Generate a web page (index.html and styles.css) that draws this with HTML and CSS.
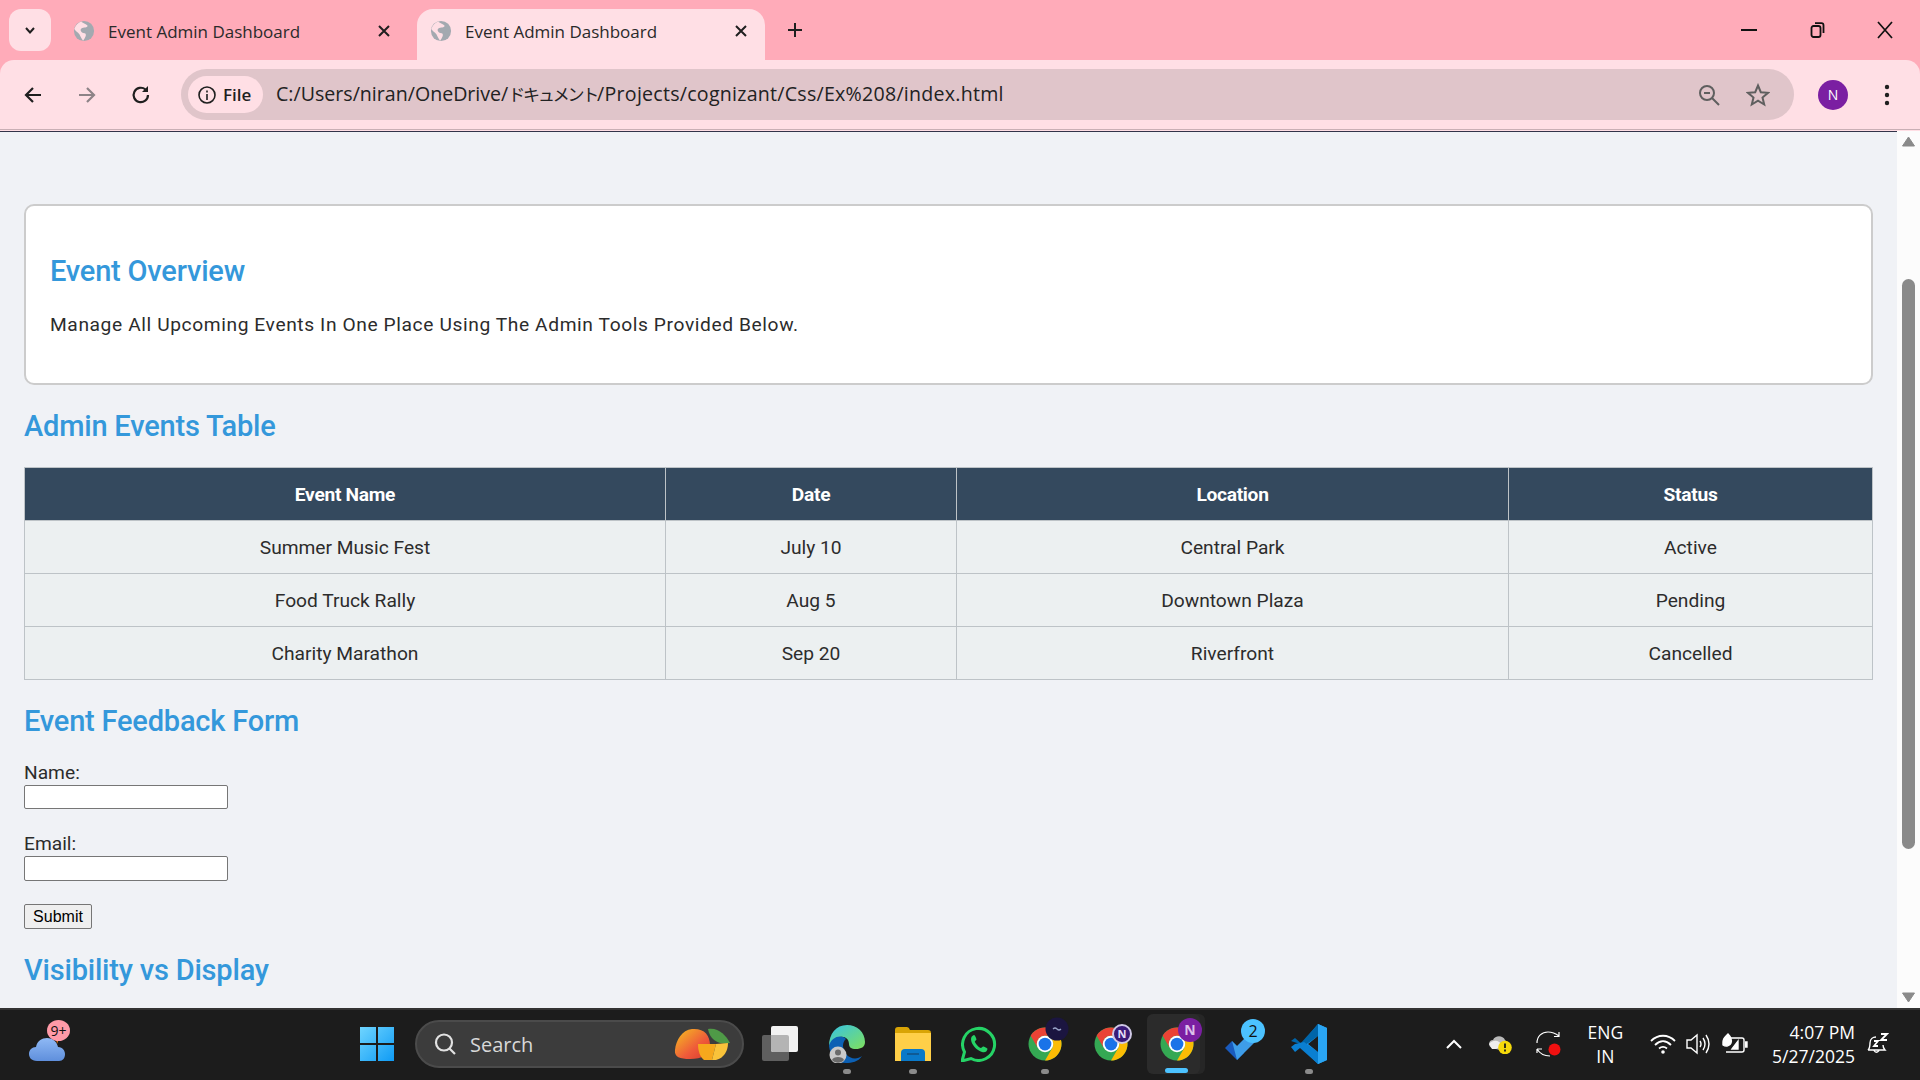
FILE: index.html
```html
<!DOCTYPE html>
<html>
<head>
	<meta charset="utf-8">
	<title>Event Admin Dashboard</title>
	<link rel="stylesheet" href="styles.css">
</head>
<body>
	<svg class="defs" width="0" height="0">
		<symbol id="globe" viewBox="0 0 24 24">
			<circle cx="12" cy="12" r="11" fill="#a3a9b0"/>
			<path d="M9 1.500C11 4 15 4 16 6.500 14.500 9 10 7.500 8.500 10 7.500 12.500 11 14.500 13 14.500 15.500 16 13 20 11 22.500 8 19 8 16 5.500 14 3.500 12.500 2 11 1.500 9.500 3 5 6 2.500 9 1.500Z" fill="#ffdfe5"/>
		</symbol>
		<symbol id="close" viewBox="0 0 16 16">
			<path d="M3 3 13 13M13 3 3 13" stroke="#1f1f1f" stroke-width="2" fill="none"/>
		</symbol>
		<symbol id="chrome" viewBox="0 0 48 48">
			<circle cx="24" cy="24" r="22" fill="#34a853"/>
			<path d="M4.950 13A22 22 0 0 1 43.050 13H24A11 11 0 0 0 14.500 29.500Z" fill="#ea4335"/>
			<path d="M43.050 13H24A11 11 0 0 1 33.500 29.500L24 46A22 22 0 0 0 43.050 13Z" fill="#fbbc04"/>
			<circle cx="24" cy="24" r="11" fill="#fff"/>
			<circle cx="24" cy="24" r="8.500" fill="#1a73e8"/>
		</symbol>
	</svg>

	<header class="tabstrip">
		<div class="tab-menu">
			<svg width="14" height="14" viewBox="0 0 14 14"><path d="M3 5 7 9.500 11 5" stroke="#1f1f1f" stroke-width="2" fill="none"/></svg>
		</div>
		<div class="tab">
			<svg class="favicon"><use href="#globe"/></svg>
			<span class="tab-title">Event Admin Dashboard</span>
			<svg class="tab-close"><use href="#close"/></svg>
		</div>
		<div class="tab tab-active">
			<svg class="favicon"><use href="#globe"/></svg>
			<span class="tab-title">Event Admin Dashboard</span>
			<svg class="tab-close"><use href="#close"/></svg>
		</div>
		<svg class="tab-new" width="18" height="18" viewBox="0 0 18 18"><path d="M9 2V16M2 9H16" stroke="#1f1f1f" stroke-width="2"/></svg>
		<div class="window-buttons">
			<svg width="16" height="16" viewBox="0 0 16 16"><path d="M0 8H16" stroke="#111" stroke-width="2"/></svg>
			<svg width="16" height="16" viewBox="0 0 16 16" fill="none" stroke="#111" stroke-width="1.800"><rect x="2.500" y="4" width="9" height="11" rx="2"/><path d="M6 1.200H12.500Q14.500 1.200 14.500 3.200V11"/></svg>
			<svg width="16" height="18" viewBox="0 0 16 18"><path d="M1 1 15 17M15 1 1 17" stroke="#111" stroke-width="1.700"/></svg>
		</div>
	</header>

	<nav class="toolbar">
		<svg class="nav-icon" width="22" height="22" viewBox="0 0 22 22" fill="none" stroke="#1f1f1f" stroke-width="2.200"><path d="M19 11H4M11 4 4 11 11 18"/></svg>
		<svg class="nav-icon" width="22" height="22" viewBox="0 0 22 22" fill="none" stroke="#8d8387" stroke-width="2.200"><path d="M3 11H18M11 4 18 11 11 18"/></svg>
		<svg class="nav-icon" width="22" height="22" viewBox="0 0 22 22" fill="none" stroke="#1f1f1f" stroke-width="2.200"><path d="M18 11A7.200 7.200 0 1 1 15.500 5.500"/><path d="M18 2V8H12" fill="#1f1f1f" stroke="none"/></svg>
		<div class="omnibox">
			<div class="file-chip">
				<svg width="20" height="20" viewBox="0 0 20 20" fill="none" stroke="#1f1f1f" stroke-width="1.600"><circle cx="10" cy="10" r="8"/><path d="M10 9V15M10 5.500V7.500"/></svg>
				<span>File</span>
			</div>
			<span class="url">C:/Users/niran/OneDrive/<span class="url-kana">ドキュメント</span><span class="url-tail">/Projects/cognizant/Css/Ex%208/index.html</span></span>
			<svg class="omni-icon" width="24" height="24" viewBox="0 0 24 24" fill="none" stroke="#5f5f5f" stroke-width="2"><circle cx="10" cy="10" r="7"/><path d="M15 15 22 22M7 10H13"/></svg>
			<svg class="omni-icon" width="24" height="24" viewBox="0 0 24 24" fill="none" stroke="#5f5f5f" stroke-width="2"><path d="M12 2.500 14.800 9.200 22 9.800 16.500 14.500 18.200 21.500 12 17.700 5.800 21.500 7.500 14.500 2 9.800 9.200 9.200Z"/></svg>
		</div>
		<div class="avatar">N</div>
		<svg width="6" height="22" viewBox="0 0 6 22" fill="#1f1f1f"><circle cx="3" cy="3" r="2.200"/><circle cx="3" cy="11" r="2.200"/><circle cx="3" cy="19" r="2.200"/></svg>
	</nav>

	<div class="viewport">
		<main class="page">
			<section class="card">
				<h2 class="overview-title">Event Overview</h2>
				<p class="overview-text">Manage All Upcoming Events In One Place Using The Admin Tools Provided Below.</p>
			</section>

			<h2 class="section-title">Admin Events Table</h2>
			<table class="events">
				<tr>
					<th class="col-name">Event Name</th>
					<th class="col-date">Date</th>
					<th class="col-place">Location</th>
					<th class="col-status">Status</th>
				</tr>
				<tr>
					<td>Summer Music Fest</td>
					<td>July 10</td>
					<td>Central Park</td>
					<td>Active</td>
				</tr>
				<tr>
					<td>Food Truck Rally</td>
					<td>Aug 5</td>
					<td>Downtown Plaza</td>
					<td>Pending</td>
				</tr>
				<tr>
					<td>Charity Marathon</td>
					<td>Sep 20</td>
					<td>Riverfront</td>
					<td>Cancelled</td>
				</tr>
			</table>

			<h2 class="section-title feedback-title">Event Feedback Form</h2>
			<form class="feedback">
				<label class="field-label">Name:</label>
				<input class="field-input" type="text">
				<label class="field-label">Email:</label>
				<input class="field-input field-tall" type="email">
				<button class="submit" type="button">Submit</button>
			</form>

			<h2 class="section-title">Visibility vs Display</h2>
		</main>
		<div class="scrollbar">
			<svg width="13" height="11" viewBox="0 0 13 11"><path d="M6.500 1 12.500 10H.5Z" fill="#8a8a8a" stroke="#8a8a8a" stroke-linejoin="round"/></svg>
			<div class="thumb-track"><div class="thumb"></div></div>
			<svg width="13" height="11" viewBox="0 0 13 11"><path d="M6.500 10 12.500 1H.5Z" fill="#8a8a8a" stroke="#8a8a8a" stroke-linejoin="round"/></svg>
		</div>
	</div>

	<footer class="taskbar">
		<div class="weather">
			<svg width="38" height="26" viewBox="0 0 38 26"><defs><linearGradient id="cloud" x1="0" y1="0" x2="0" y2="1"><stop offset="0" stop-color="#8fb9f5"/><stop offset="1" stop-color="#5f8fdc"/></linearGradient></defs><path d="M27 2 31 0 28 8Z" fill="#ef7c1a"/><path d="M8 25C2 25 0 21 0 18 0 14 3 11 7 11 8 5 13 2 18 2 24 2 28 6 29 11 34 11 36 15 36 18 36 22 34 25 30 25Z" fill="url(#cloud)"/></svg>
			<span class="weather-badge">9+</span>
		</div>

		<div class="task-center">
			<div class="app">
				<svg width="36" height="36" viewBox="0 0 36 36"><defs><linearGradient id="win" x1="0" y1="0" x2="1" y2="1"><stop offset="0" stop-color="#6fd5ff"/><stop offset="1" stop-color="#0f9bf5"/></linearGradient></defs><path d="M1 1H17V17H1ZM19 1H35V17H19ZM1 19H17V35H1ZM19 19H35V35H19Z" fill="url(#win)"/></svg>
			</div>
			<div class="search">
				<svg width="24" height="24" viewBox="0 0 24 24" fill="none" stroke="#e2e2e2" stroke-width="2.200"><circle cx="11" cy="10.500" r="8"/><path d="M16.500 16.500 22 22"/></svg>
				<span class="search-text">Search</span>
				<svg class="mango" width="56" height="34" viewBox="0 0 56 34"><defs><linearGradient id="mango" x1="0" y1="0" x2="1" y2="1"><stop offset="0" stop-color="#f5c21f"/><stop offset=".6" stop-color="#ef5a3a"/><stop offset="1" stop-color="#d93a2e"/></linearGradient></defs><path d="M18 2C30 1 36 8 36 18 36 28 28 32 16 32 6 32 0 30 1 23 2 13 8 3 18 2Z" fill="url(#mango)"/><path d="M34 2C44 0 52 8 56 16 46 18 36 14 34 2Z" fill="#4f9a47"/><path d="M24 17H42L38 33H30C26 30 24 24 24 17Z" fill="#f6a81c"/><path d="M42 17 54 16C54 24 50 31 42 33H38Z" fill="#f9c33a"/></svg>
			</div>
			<div class="app">
				<svg width="38" height="36" viewBox="0 0 38 36"><rect x="0" y="9" width="27" height="26" rx="2" fill="#5f5f5f"/><rect x="9" y="0" width="27" height="26" rx="2" fill="#f2f2f2"/><path d="M9 9H25Q27 9 27 11V26H11Q9 26 9 24Z" fill="#b4b4b4"/></svg>
			</div>
			<div class="app app-open">
				<svg width="36" height="38" viewBox="0 0 36 38"><defs><linearGradient id="edge" x1="0" y1="0" x2="1" y2="1"><stop offset="0" stop-color="#36c3e6"/><stop offset="1" stop-color="#7fe05c"/></linearGradient></defs><path d="M18 0C28 0 36 7 36 17 36 22 32 24 27 24 22 24 20 22 20 19 20 14 16 11 11 12 6 13 2 17 0 21 0 9 7 0 18 0Z" fill="url(#edge)"/><path d="M0 21C2 12 12 9 17 14 13 17 13 24 17 29 21 34 28 35 33 31 29 37 23 38 17 38 8 38 1 31 0 21Z" fill="#0c60b4"/><circle cx="9" cy="30" r="8.500" fill="#c9c9c9"/><circle cx="9" cy="27.500" r="3" fill="#6b6b6b"/><path d="M3 35C4 31 14 31 15 35 12 38.500 6 38.500 3 35Z" fill="#6b6b6b"/></svg>
			</div>
			<div class="app app-open">
				<svg width="36" height="34" viewBox="0 0 36 34"><path d="M0 4V3Q0 0 3 0H12Q14 0 15 3H33Q36 3 36 6V34H0Z" fill="#d9a405"/><path d="M0 6H36V34H0Z" fill="#ffcf48"/><path d="M6 34V26Q6 22 10 22H26Q30 22 30 26V34Z" fill="#0a79c9"/><path d="M12 27H24" stroke="#0f5a94" stroke-width="2"/></svg>
			</div>
			<div class="app">
				<svg width="36" height="36" viewBox="0 0 36 36"><path d="M1 35 3.500 26A16 16 0 1 1 10 32.500Z" fill="none" stroke="#25d366" stroke-width="3"/><path d="M12 9.500C10 10.500 9.500 13 10.500 16 12 20 16 24.500 21 26 24 27 26 25.500 26.500 23 26.500 22 23 20.500 22 20.500L20 22C18 21.500 14.500 18 13.800 15.500L15.500 13.500C15.500 12.500 14 9 13 9Z" fill="#25d366"/></svg>
			</div>
			<div class="app app-open">
				<svg class="chrome-logo"><use href="#chrome"/></svg>
				<svg class="chrome-badge" width="24" height="24" viewBox="0 0 24 24"><circle cx="12" cy="12" r="11.500" fill="#1b1540"/><path d="M8 12Q10 10 12 12T16 12" stroke="#9aa4c8" stroke-width="1.200" fill="none"/></svg>
			</div>
			<div class="app">
				<svg class="chrome-logo"><use href="#chrome"/></svg>
				<span class="profile-badge profile-outline">N</span>
			</div>
			<div class="app app-active">
				<svg class="chrome-logo"><use href="#chrome"/></svg>
				<span class="profile-badge">N</span>
			</div>
			<div class="app">
				<svg width="36" height="32" viewBox="0 0 36 32"><path d="M0 20 7 13 19 25 12 32Z" fill="#195abd"/><path d="M7 13 12 18 29 1 36 8 12 32Z" fill="#3e9de8"/></svg>
				<span class="todo-badge">2</span>
			</div>
			<div class="app app-open">
				<svg width="36" height="40" viewBox="0 0 36 40"><path d="M27 0 36 4V36L27 40 9 22Z" fill="#1f9cf0"/><path d="M27 0 27 12 13 22 4 14 0 17 9 20 27 0Z" fill="#0065a9"/><path d="M0 23 4 20 13 18 27 28V40L9 24 4 28Z" fill="#0a7fd1"/><path d="M36 4 27 0V40L36 36Z" fill="#2aa5f3"/><path d="M27 12V28L17 20Z" fill="#1c1c1c"/></svg>
			</div>
		</div>

		<div class="tray">
			<svg width="18" height="12" viewBox="0 0 18 12" class="tray-caret"><path d="M2 10 9 3 16 10" stroke="#fff" stroke-width="2" fill="none"/></svg>
			<svg class="tray-cloud" width="24" height="20" viewBox="0 0 24 20"><path d="M4 14C0 13 0 6 5 6 7 1 15 1 17 6L19 8 12 16Z" fill="#b9b9b9"/><path d="M1 10C5 5 12 6 14 12L8 15H4Z" fill="#eee"/><circle cx="17" cy="13.500" r="6.800" fill="#f5d90a"/><path d="M17 9.500V14M17 15.500V17.500" stroke="#1c1c1c" stroke-width="1.800"/></svg>
			<svg class="tray-sync" width="26" height="26" viewBox="0 0 26 26" fill="none" stroke="#fff" stroke-width="1.200"><path d="M1 12C1 5 6 1 12 1 16 1 19 2 23 5M23 1V5.500H18M1 18H6M1 18V22M1 18C4 23 9 25 14 25"/><circle cx="18.500" cy="18.500" r="6" fill="#f01010" stroke="none"/></svg>
			<div class="tray-lang"><span>ENG</span><span>IN</span></div>
			<svg class="tray-wifi" width="26" height="20" viewBox="0 0 26 20" fill="none" stroke="#fff" stroke-width="1.800"><path d="M1 7C8 0 18 0 25 7M5 11C10 6 16 6 21 11M9 14.500C11.500 12.500 14.500 12.500 17 14.500"/><circle cx="13" cy="18" r="1.800" fill="#fff" stroke="none"/></svg>
			<svg class="tray-volume" width="26" height="22" viewBox="0 0 26 22" fill="none" stroke="#fff" stroke-width="1.400"><path d="M1 7H5L11 2V20L5 15H1Z"/><path d="M14 8Q16 11 14 14M17 5Q21 11 17 17M20 2Q26 11 20 20"/></svg>
			<svg class="tray-battery" width="26" height="22" viewBox="0 0 26 22" fill="none" stroke="#fff" stroke-width="1.400"><path d="M8 5H20Q22 5 22 7V17Q22 19 20 19H4"/><path d="M23 9H25V14H23" fill="#fff"/><path d="M1 9C1 5 4 3 6 1 9 4 10 7 9 10 8 13 4 14 1 12Z" fill="#fff"/><path d="M10 16 16 8V16Z" fill="#fff"/></svg>
			<div class="tray-clock"><span>4:07 PM</span><span>5/27/2025</span></div>
			<svg class="tray-bell" width="22" height="24" viewBox="0 0 22 24" fill="none" stroke="#fff" stroke-width="1.400"><path d="M1 18C3 16 3 14 3 11 3 7 6 5 9 5M1 18H18C16 16 16 14 16 13M7 18.500Q9 22 12 18.500"/><path d="M7 9H11L7 14H11M14 2H20L14 8H20" stroke-width="1.800"/></svg>
		</div>
	</footer>
</body>
</html>
```

FILE: styles.css
```css
html, body {
	margin: 0;
	height: 100%;
	overflow: hidden;
}

body {
	display: flex;
	flex-direction: column;
	font-family: "Roboto", "Liberation Sans", sans-serif;
	background: #ffabb9;
}

.defs {
	display: block;
	height: 0;
}

/* browser chrome */
.tabstrip {
	height: 60px;
	flex: none;
	display: flex;
	align-items: flex-end;
	padding-left: 9px;
	font-family: "Open Sans", "Noto Sans", sans-serif;
	color: #2a2a2a;
}

.tab-menu {
	width: 42px;
	height: 42px;
	margin-bottom: 9px;
	border-radius: 12px;
	background: #ffdfe5;
	display: flex;
	align-items: center;
	justify-content: center;
}

.tab {
	width: 348px;
	height: 51px;
	flex: none;
	margin-left: 9px;
	display: flex;
	align-items: center;
	box-sizing: border-box;
	padding: 0 16px 7px 13px;
	border-radius: 16px 16px 0 0;
	font-size: 17px;
}

.tab-active {
	background: #ffdfe5;
}

.favicon {
	width: 22px;
	height: 22px;
	flex: none;
}

.tab-title {
	margin-left: 13px;
	flex: 1;
	white-space: nowrap;
}

.tab-close {
	width: 16px;
	height: 16px;
	flex: none;
}

.tab-new {
	margin: 0 0 21px 21px;
}

.window-buttons {
	margin-left: auto;
	display: flex;
	align-items: center;
	gap: 52px;
	padding: 0 27px 22px 0;
	height: 16px;
	margin-bottom: 0;
}

.toolbar {
	height: 69px;
	flex: none;
	display: flex;
	align-items: center;
	box-sizing: border-box;
	padding-left: 22px;
	border-radius: 14px 14px 0 0;
	background: #ffdfe5;
}

.nav-icon {
	flex: none;
	margin-right: 32px;
}

.omnibox {
	margin-left: -3px;
	width: 1613px;
	height: 51px;
	flex: none;
	display: flex;
	align-items: center;
	box-sizing: border-box;
	padding-left: 7px;
	border-radius: 26px;
	background: #e0c5ca;
}

.file-chip {
	width: 75px;
	height: 37px;
	flex: none;
	display: flex;
	align-items: center;
	box-sizing: border-box;
	padding-left: 9px;
	gap: 6px;
	border-radius: 19px;
	background: #ffdfe5;
	font: 600 17px "Open Sans", sans-serif;
	color: #1f1f1f;
}

.url {
	margin-left: 13px;
	padding-bottom: 2px;
	flex: 1;
	font: 19.600px "Open Sans", "Noto Sans CJK JP", sans-serif;
	color: #222;
	white-space: nowrap;
}

.url-kana {
	font-size: 17px;
	letter-spacing: -2.200px;
}

.url-tail {
	letter-spacing: 0.250px;
}

.omni-icon {
	flex: none;
	margin-right: 25px;
}

.omni-icon:last-child {
	margin-right: 24px;
}

.avatar {
	width: 30px;
	height: 30px;
	flex: none;
	margin: 0 36px 0 24px;
	border-radius: 50%;
	background: #7b1fa2;
	color: #fff;
	font: 14px/30px "Open Sans", sans-serif;
	text-align: center;
}

/* page area */
.viewport {
	flex: 1;
	min-height: 0;
	display: flex;
	border-top: 1px solid #c9afb5;
	background: #ffdfe5;
	padding-top: 1px;
}

.page {
	flex: 1;
	min-width: 0;
	overflow: hidden;
	box-sizing: border-box;
	padding: 72px 24px 0 24px;
	border-top: 1px solid #33344a;
	background: #f0f2f6;
	color: #2c2c2c;
}

.card {
	box-sizing: border-box;
	height: 181px;
	padding: 48px 24px 0;
	border: 2px solid #cccccc;
	border-radius: 10px;
	background: #fff;
}

h2 {
	margin: 0;
	font-size: 29px;
	font-weight: 500;
	line-height: 34px;
	color: #3498db;
	letter-spacing: -0.200px;
}

.overview-title {
	margin-bottom: 25px;
}

.overview-text {
	margin: 0;
	font-size: 19.200px;
	line-height: 24px;
	letter-spacing: 0.600px;
}

.section-title {
	margin-top: 24px;
}

.events {
	margin-top: 24px;
	width: 1848px;
	table-layout: fixed;
	border-collapse: collapse;
	text-align: center;
	font-size: 19.200px;
}

.events th, .events td {
	padding: 0;
	border: 1px solid #bdc3c7;
}

.events th {
	height: 52px;
	background: #34495e;
	color: #fff;
	font-weight: 700;
	letter-spacing: -0.300px;
}

.events td {
	height: 52px;
	background: #ecf0f1;
}

.col-name { width: 640px; }
.col-date { width: 290px; }
.col-place { width: 551px; }
.col-status { width: 363px; }

.feedback {
	margin-top: 23px;
	display: flex;
	flex-direction: column;
	align-items: flex-start;
}

.field-label {
	font-size: 19.200px;
	line-height: 24px;
}

.field-input {
	box-sizing: border-box;
	width: 204px;
	height: 24px;
	margin: 0 0 23px;
	padding: 0;
	border: 1px solid #767676;
	border-radius: 2px;
	background: #fff;
}

.field-tall {
	height: 25px;
	margin-bottom: 23px;
}

.submit {
	box-sizing: border-box;
	width: 68px;
	height: 25px;
	padding: 0;
	border: 1px solid #767676;
	border-radius: 2px;
	background: #efefef;
	color: #000;
	font: 16px "Liberation Sans", sans-serif;
}

.scrollbar {
	width: 23px;
	flex: none;
	display: flex;
	flex-direction: column;
	align-items: center;
	padding: 5px 0 5px;
	box-sizing: border-box;
	background: #fcfcfc;
}

.thumb-track {
	flex: 1;
	width: 100%;
	padding-top: 132px;
	box-sizing: border-box;
}

.thumb {
	width: 13px;
	height: 570px;
	margin: 0 auto;
	border-radius: 7px;
	background: #8a8a8a;
}

/* windows taskbar */
.taskbar {
	height: 72px;
	flex: none;
	position: relative;
	display: flex;
	align-items: center;
	box-sizing: border-box;
	padding-bottom: 2px;
	border-top: 2px solid #333;
	background: #1c1c1c;
	color: #fff;
}

.weather {
	width: 344px;
	flex: none;
	position: relative;
	height: 62px;
	box-sizing: border-box;
	padding: 23px 0 0 29px;
}

.weather-badge {
	position: absolute;
	left: 47px;
	top: 7px;
	width: 23px;
	height: 21px;
	border-radius: 50%;
	background: #ff9aa8;
	color: #111;
	font: 14px/21px "Open Sans", sans-serif;
	text-align: center;
}

.task-center {
	display: flex;
	align-items: center;
}

.app {
	width: 66px;
	height: 62px;
	flex: none;
	position: relative;
	display: flex;
	align-items: center;
	justify-content: center;
}

.app-open::after, .app-active::after {
	content: "";
	position: absolute;
	left: 29px;
	bottom: 1px;
	width: 8px;
	height: 5px;
	border-radius: 3px;
	background: #8b8b8b;
}

.app-active {
	box-sizing: border-box;
	width: 53px;
	height: 60px;
	margin: 0 10px 0 3px;
	padding-left: 7px;
	background: #2b2b2b;
	border-radius: 6px;
	box-shadow: 5px 0 0 #262626;
}

.app-active::after {
	left: 18px;
	width: 23px;
	background: #4cc2ff;
}

.search {
	width: 329px;
	height: 48px;
	flex: none;
	margin: 0 4px 0 5px;
	display: flex;
	align-items: center;
	box-sizing: border-box;
	padding-left: 16px;
	border: 2px solid #4b4b4b;
	border-radius: 24px;
	background: #3c3c3c;
}

.search-text {
	margin-left: 13px;
	flex: 1;
	font: 20px "Open Sans", sans-serif;
	color: #d8d8d8;
}

.mango {
	margin-right: 12px;
}

.chrome-logo {
	width: 36px;
	height: 36px;
}

.chrome-badge {
	position: absolute;
	left: 33px;
	top: 4px;
}

.profile-badge {
	position: absolute;
	left: 31px;
	top: 4px;
	width: 24px;
	height: 24px;
	border-radius: 50%;
	background: #7b1fa2;
	color: #ddc0ea;
	font: 700 14px/24px "Open Sans", sans-serif;
	text-align: center;
}

.profile-outline {
	left: 34px;
	top: 11px;
	width: 16px;
	height: 16px;
	border: 2px solid #cfc8e6;
	background: #3a1a78;
	color: #e6def7;
	font-size: 11px;
	line-height: 16px;
}

.todo-badge {
	position: absolute;
	left: 31px;
	top: 6px;
	width: 24px;
	height: 24px;
	border-radius: 50%;
	background: #4cc2ff;
	color: #111;
	font: 16px/24px "Open Sans", sans-serif;
	text-align: center;
}

.tray {
	position: absolute;
	right: 0;
	top: 0;
	bottom: 2px;
	display: flex;
	align-items: center;
}

.tray-caret { margin-right: 25px; }
.tray-cloud { margin-right: 24px; }
.tray-sync { margin-right: 25px; }

.tray-lang, .tray-clock {
	display: flex;
	flex-direction: column;
	font: 17.500px/24px "Open Sans", sans-serif;
	text-align: center;
}

.tray-lang { margin-right: 27px; }
.tray-wifi { margin-right: 10px; }
.tray-volume { margin-right: 10px; }
.tray-battery { margin-right: 24px; }

.tray-clock {
	text-align: right;
	margin-right: 12px;
}

.tray-bell { margin-right: 31px; }
```
